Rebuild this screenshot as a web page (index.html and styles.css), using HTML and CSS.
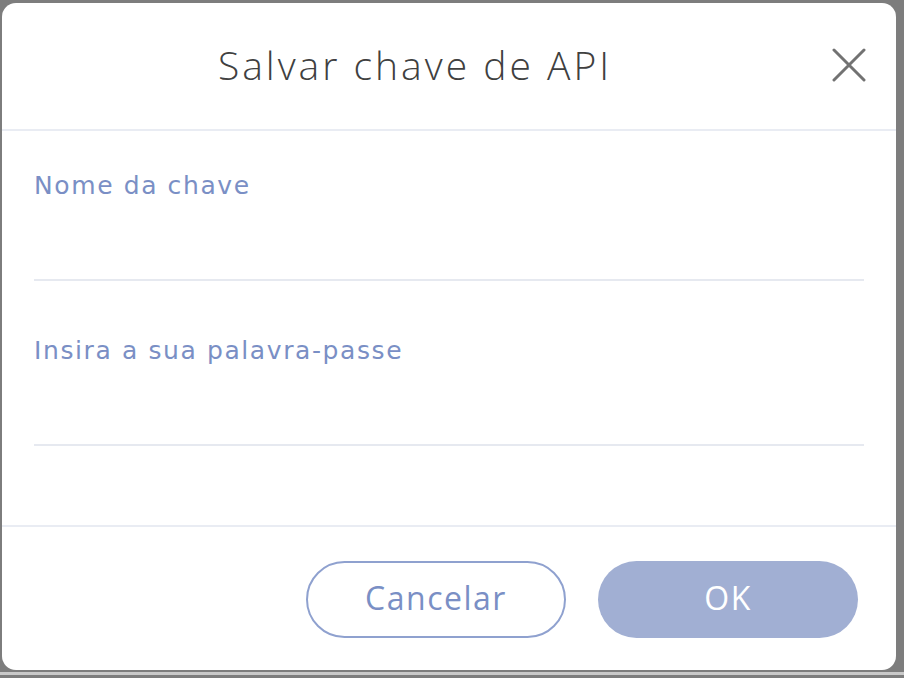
FILE: index.html
```html
<!DOCTYPE html>
<html lang="pt">
<head>
<meta charset="utf-8">
<title>Salvar chave de API</title>
<link rel="stylesheet" href="styles.css">
</head>
<body>
<div class="stage">
  <div class="dialog">
    <header class="dialog-header">
      <h1 class="dialog-title">Salvar chave de API</h1>
      <button class="close-btn" aria-label="Fechar">
        <svg width="34" height="34" viewBox="0 0 34 34"><path d="M2 2 L32 32 M32 2 L2 32" stroke="#727272" stroke-width="3" fill="none" stroke-linecap="round"/></svg>
      </button>
    </header>
    <main class="dialog-body">
      <label class="field">
        <span class="field-label">Nome da chave</span>
        <input class="field-input" type="text">
      </label>
      <label class="field">
        <span class="field-label">Insira a sua palavra-passe</span>
        <input class="field-input" type="password">
      </label>
    </main>
    <footer class="dialog-footer">
      <button class="btn btn-outline">Cancelar</button>
      <button class="btn btn-primary">OK</button>
    </footer>
  </div>
</div>
</body>
</html>
```

FILE: styles.css
```css
* { box-sizing: border-box; }
html, body { margin: 0; padding: 0; }
body {
  width: 904px;
  height: 678px;
  background: #7d7d7d;
  overflow: hidden;
  font-family: "Open Sans", "DejaVu Sans", sans-serif;
}
.stage {
  height: 675px;
  padding: 3px 8px 5px 2px;
  background: #7d7d7d;
  border-bottom: 3px solid #c9c9c9;
}
.dialog {
  width: 894px;
  height: 667px;
  background: #fff;
  border-radius: 14px;
  display: flex;
  flex-direction: column;
}
.dialog-header {
  height: 128px;
  border-bottom: 2px solid #e9ecf3;
  display: flex;
  align-items: center;
  gap: 12px;
  padding: 0 30px 0 8px;
}
.dialog-title {
  flex: 1;
  margin: 0;
  text-align: center;
  font-weight: 300;
  font-size: 39px;
  color: #404040;
  letter-spacing: 3px;
  padding-bottom: 4px;
}
.close-btn {
  border: 0;
  background: none;
  padding: 0;
  width: 34px;
  height: 34px;
  display: flex;
  margin-bottom: 2px;
}
.dialog-body {
  flex: 1;
  padding: 40px 32px 0 32px;
  display: flex;
  flex-direction: column;
  gap: 55px;
  border-bottom: 2px solid #e9ecf3;
}
.field {
  display: flex;
  flex-direction: column;
}
.field-label {
  font-family: "DejaVu Sans", sans-serif;
  font-size: 25px;
  letter-spacing: 1.6px;
  color: #7a8fc5;
  line-height: 30px;
}
.field-input {
  border: 0;
  border-bottom: 2px solid #e6e9f0;
  height: 80px;
  outline: none;
  font-size: 22px;
  background: transparent;
}
.dialog-footer {
  height: 143px;
  display: flex;
  justify-content: flex-end;
  align-items: flex-start;
  gap: 32px;
  padding: 34px 38px 0 0;
}
.btn {
  width: 260px;
  height: 77px;
  border-radius: 39px;
  font-family: "Open Sans", sans-serif;
  font-size: 32px;
  letter-spacing: 1.5px;
  padding: 0 0 4px;
  cursor: pointer;
}
.btn-outline {
  background: #fff;
  border: 2px solid #8fa1cf;
  color: #7a8fc5;
}
.btn-primary {
  background: #a1afd3;
  border: 0;
  color: #fff;
}
```
